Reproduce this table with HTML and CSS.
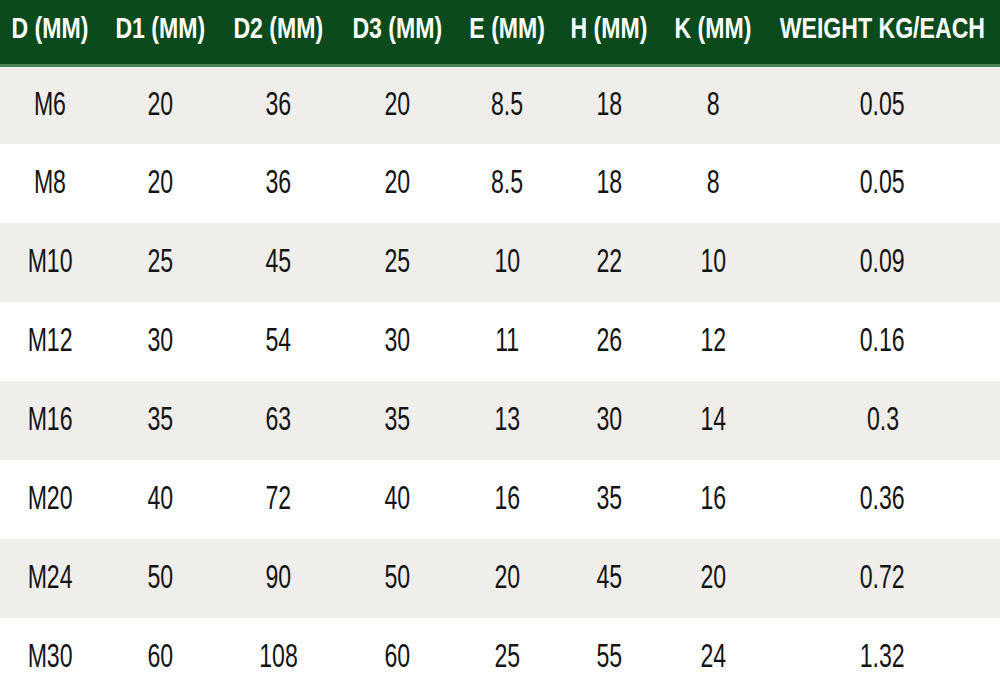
FILE: index.html
```html
<!DOCTYPE html>
<html>
<head>
<meta charset="utf-8">
<link rel="stylesheet" href="styles.css">
</head>
<body>
<table class="spec">
  <colgroup>
    <col class="c1"><col class="c2"><col class="c3"><col class="c4"><col class="c5"><col class="c6"><col class="c7"><col class="c8">
  </colgroup>
  <thead>
    <tr>
      <th><span>D (MM)</span></th>
      <th><span>D1 (MM)</span></th>
      <th><span>D2 (MM)</span></th>
      <th><span>D3 (MM)</span></th>
      <th><span>E (MM)</span></th>
      <th><span>H (MM)</span></th>
      <th><span>K (MM)</span></th>
      <th><span>WEIGHT KG/EACH</span></th>
    </tr>
  </thead>
  <tbody>
    <tr><td><span>M6</span></td><td><span>20</span></td><td><span>36</span></td><td><span>20</span></td><td><span>8.5</span></td><td><span>18</span></td><td><span>8</span></td><td><span>0.05</span></td></tr>
    <tr><td><span>M8</span></td><td><span>20</span></td><td><span>36</span></td><td><span>20</span></td><td><span>8.5</span></td><td><span>18</span></td><td><span>8</span></td><td><span>0.05</span></td></tr>
    <tr><td><span>M10</span></td><td><span>25</span></td><td><span>45</span></td><td><span>25</span></td><td><span>10</span></td><td><span>22</span></td><td><span>10</span></td><td><span>0.09</span></td></tr>
    <tr><td><span>M12</span></td><td><span>30</span></td><td><span>54</span></td><td><span>30</span></td><td><span>11</span></td><td><span>26</span></td><td><span>12</span></td><td><span>0.16</span></td></tr>
    <tr><td><span>M16</span></td><td><span>35</span></td><td><span>63</span></td><td><span>35</span></td><td><span>13</span></td><td><span>30</span></td><td><span>14</span></td><td><span>0.3</span></td></tr>
    <tr><td><span>M20</span></td><td><span>40</span></td><td><span>72</span></td><td><span>40</span></td><td><span>16</span></td><td><span>35</span></td><td><span>16</span></td><td><span>0.36</span></td></tr>
    <tr><td><span>M24</span></td><td><span>50</span></td><td><span>90</span></td><td><span>50</span></td><td><span>20</span></td><td><span>45</span></td><td><span>20</span></td><td><span>0.72</span></td></tr>
    <tr><td><span>M30</span></td><td><span>60</span></td><td><span>108</span></td><td><span>60</span></td><td><span>25</span></td><td><span>55</span></td><td><span>24</span></td><td><span>1.32</span></td></tr>
  </tbody>
</table>
</body>
</html>
```

FILE: styles.css
```css
html, body {
  margin: 0;
  padding: 0;
  background: #ffffff;
  overflow: hidden;
}

.spec {
  width: 1000px;
  border-collapse: collapse;
  table-layout: fixed;
  font-family: "Liberation Sans", Arial, sans-serif;
}

.c1 { width: 100px; }
.c2 { width: 120px; }
.c3 { width: 117px; }
.c4 { width: 120px; }
.c5 { width: 100px; }
.c6 { width: 104px; }
.c7 { width: 104px; }
.c8 { width: 235px; }

.spec th,
.spec td {
  padding: 0;
  text-align: center;
  white-space: nowrap;
  overflow: visible;
}

.spec span {
  display: inline-block;
  margin: 0 -60px;
  transform-origin: center center;
}

.spec thead tr {
  background: #0b4a1d;
}

.spec th {
  height: 65px;
  border-bottom: 3px solid #4f8358;
  color: #ffffff;
  font-size: 30px;
  font-weight: 700;
  line-height: 30px;
  vertical-align: top;
  padding-top: 13px;
  box-sizing: border-box;
}

.spec th span {
  transform: scaleX(0.77);
}

.spec td {
  height: 79px;
  color: #141414;
  font-size: 33px;
  font-weight: 400;
  line-height: 33px;
  vertical-align: middle;
  padding-bottom: 4px;
  box-sizing: border-box;
}

.spec td span {
  transform: scaleX(0.7);
}

.spec tbody tr:nth-child(odd) {
  background: #efeeea;
}

.spec tbody tr:nth-child(even) {
  background: #ffffff;
}
```
